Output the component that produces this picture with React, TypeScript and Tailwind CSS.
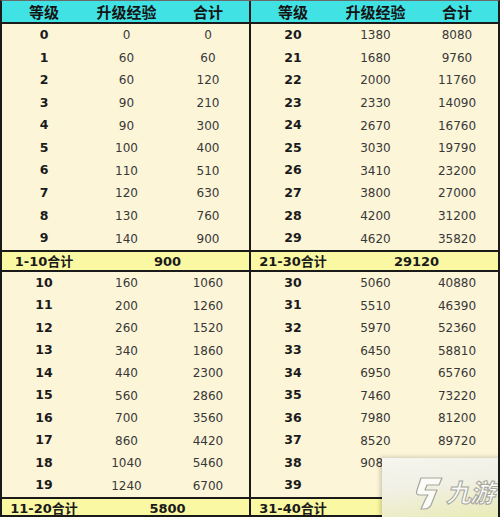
import React from "react";

type Row = [string, string, string];

const topLeft: Row[] = [
  ["0", "0", "0"],
  ["1", "60", "60"],
  ["2", "60", "120"],
  ["3", "90", "210"],
  ["4", "90", "300"],
  ["5", "100", "400"],
  ["6", "110", "510"],
  ["7", "120", "630"],
  ["8", "130", "760"],
  ["9", "140", "900"],
];
const topRight: Row[] = [
  ["20", "1380", "8080"],
  ["21", "1680", "9760"],
  ["22", "2000", "11760"],
  ["23", "2330", "14090"],
  ["24", "2670", "16760"],
  ["25", "3030", "19790"],
  ["26", "3410", "23200"],
  ["27", "3800", "27000"],
  ["28", "4200", "31200"],
  ["29", "4620", "35820"],
];
const bottomLeft: Row[] = [
  ["10", "160", "1060"],
  ["11", "200", "1260"],
  ["12", "260", "1520"],
  ["13", "340", "1860"],
  ["14", "440", "2300"],
  ["15", "560", "2860"],
  ["16", "700", "3560"],
  ["17", "860", "4420"],
  ["18", "1040", "5460"],
  ["19", "1240", "6700"],
];
const bottomRight: Row[] = [
  ["30", "5060", "40880"],
  ["31", "5510", "46390"],
  ["32", "5970", "52360"],
  ["33", "6450", "58810"],
  ["34", "6950", "65760"],
  ["35", "7460", "73220"],
  ["36", "7980", "81200"],
  ["37", "8520", "89720"],
  ["38", "9080", "98800"],
  ["39", "", ""],
];

function DataRow({ r, tall }: { r: Row; tall: boolean }) {
  return (
    <div
      className={
        tall
          ? "h-[22.6px] grid grid-cols-[84px_81px_82px] items-center text-center"
          : "h-[22.5px] grid grid-cols-[84px_81px_82px] items-center text-center"
      }
    >
      <span className="font-bold text-[12.5px] text-[#1a1a1a] font-['DejaVu_Sans',sans-serif]">{r[0]}</span>
      <span className="text-[12px] text-[#383838] font-['DejaVu_Sans',sans-serif]">{r[1]}</span>
      <span className="text-[12px] text-[#383838] font-['DejaVu_Sans',sans-serif]">{r[2]}</span>
    </div>
  );
}

function Subtotal({ label, sum, last }: { label: string; sum: string; last: boolean }) {
  return (
    <div
      className={
        last
          ? "h-[20px] border-t-2 border-b-2 border-[#1a1a1a] bg-[#fbf8a3] grid grid-cols-[84px_163px] items-center"
          : "h-[22px] border-t-2 border-b-2 border-[#1a1a1a] bg-[#fbf8a3] grid grid-cols-[84px_163px] items-center"
      }
    >
      <span className="flex justify-center whitespace-nowrap font-bold text-[13px] text-[#1a1a1a] font-['DejaVu_Sans','Noto_Sans_CJK_SC',sans-serif]">
        {label}
      </span>
      <span className="text-center font-bold text-[13px] text-[#1a1a1a] font-['DejaVu_Sans',sans-serif]">{sum}</span>
    </div>
  );
}

function Half({
  top,
  bottom,
  topLabel,
  topSum,
  bottomLabel,
  bottomSum,
  left,
}: {
  top: Row[];
  bottom: Row[];
  topLabel: string;
  topSum: string;
  bottomLabel: string;
  bottomSum: string;
  left: boolean;
}) {
  return (
    <div className={left ? "w-[249px] border-r-2 border-[#1a1a1a] flex flex-col" : "w-[247px] flex flex-col"}>
      <div className="h-[23px] border-b-2 border-[#1a1a1a] bg-[#40e2e4] grid grid-cols-[84px_81px_82px] items-center text-center font-bold text-[15px] leading-none text-[#141414] font-['Noto_Sans_CJK_SC',sans-serif]">
        <span>等级</span>
        <span>升级经验</span>
        <span>合计</span>
      </div>
      {top.map((r) => (
        <DataRow key={r[0]} r={r} tall={true} />
      ))}
      <Subtotal label={topLabel} sum={topSum} last={false} />
      {bottom.map((r) => (
        <DataRow key={r[0]} r={r} tall={false} />
      ))}
      <Subtotal label={bottomLabel} sum={bottomSum} last={true} />
    </div>
  );
}

export default function App() {
  return (
    <div className="relative w-[500px] h-[517px] overflow-hidden bg-[#fcf5d8] border-t border-l-2 border-r-2 border-t-[#6a6a6a] border-l-[#1a1a1a] border-r-[#1a1a1a] flex">
      <Half
        top={topLeft}
        bottom={bottomLeft}
        topLabel="1-10合计"
        topSum="900"
        bottomLabel="11-20合计"
        bottomSum="5800"
        left={true}
      />
      <Half
        top={topRight}
        bottom={bottomRight}
        topLabel="21-30合计"
        topSum="29120"
        bottomLabel="31-40合计"
        bottomSum=""
        left={false}
      />
      <div className="absolute left-[380px] top-[457px] w-[120px] h-[60px] bg-[linear-gradient(172deg,#f6f5ef_0%,#f1f0e4_45%,#e9ebb4_100%)] shadow-[-2px_-1px_4px_rgba(0,0,0,0.18)]">
        <svg className="absolute left-[30px] top-[18px]" width="32" height="34" viewBox="0 0 32 34">
          <path
            d="M9 2 L30 2 L27 9 L15 9 L13 14 L25 14 L19 29 Q17 33 12 33 L9 33 L14 22 L16 19 L8 19 Q3 19 5 14 Z"
            fill="#fbfbf8"
            stroke="#a5a59c"
            strokeWidth="1.2"
            strokeLinejoin="round"
          />
        </svg>
        <span className="absolute left-[64px] top-[21px] italic font-bold text-[25px] leading-none tracking-[-1px] text-[#fbfbf8] [-webkit-text-stroke:1px_#a5a59c] font-['Noto_Sans_CJK_SC',sans-serif]">
          九游
        </span>
      </div>
    </div>
  );
}
